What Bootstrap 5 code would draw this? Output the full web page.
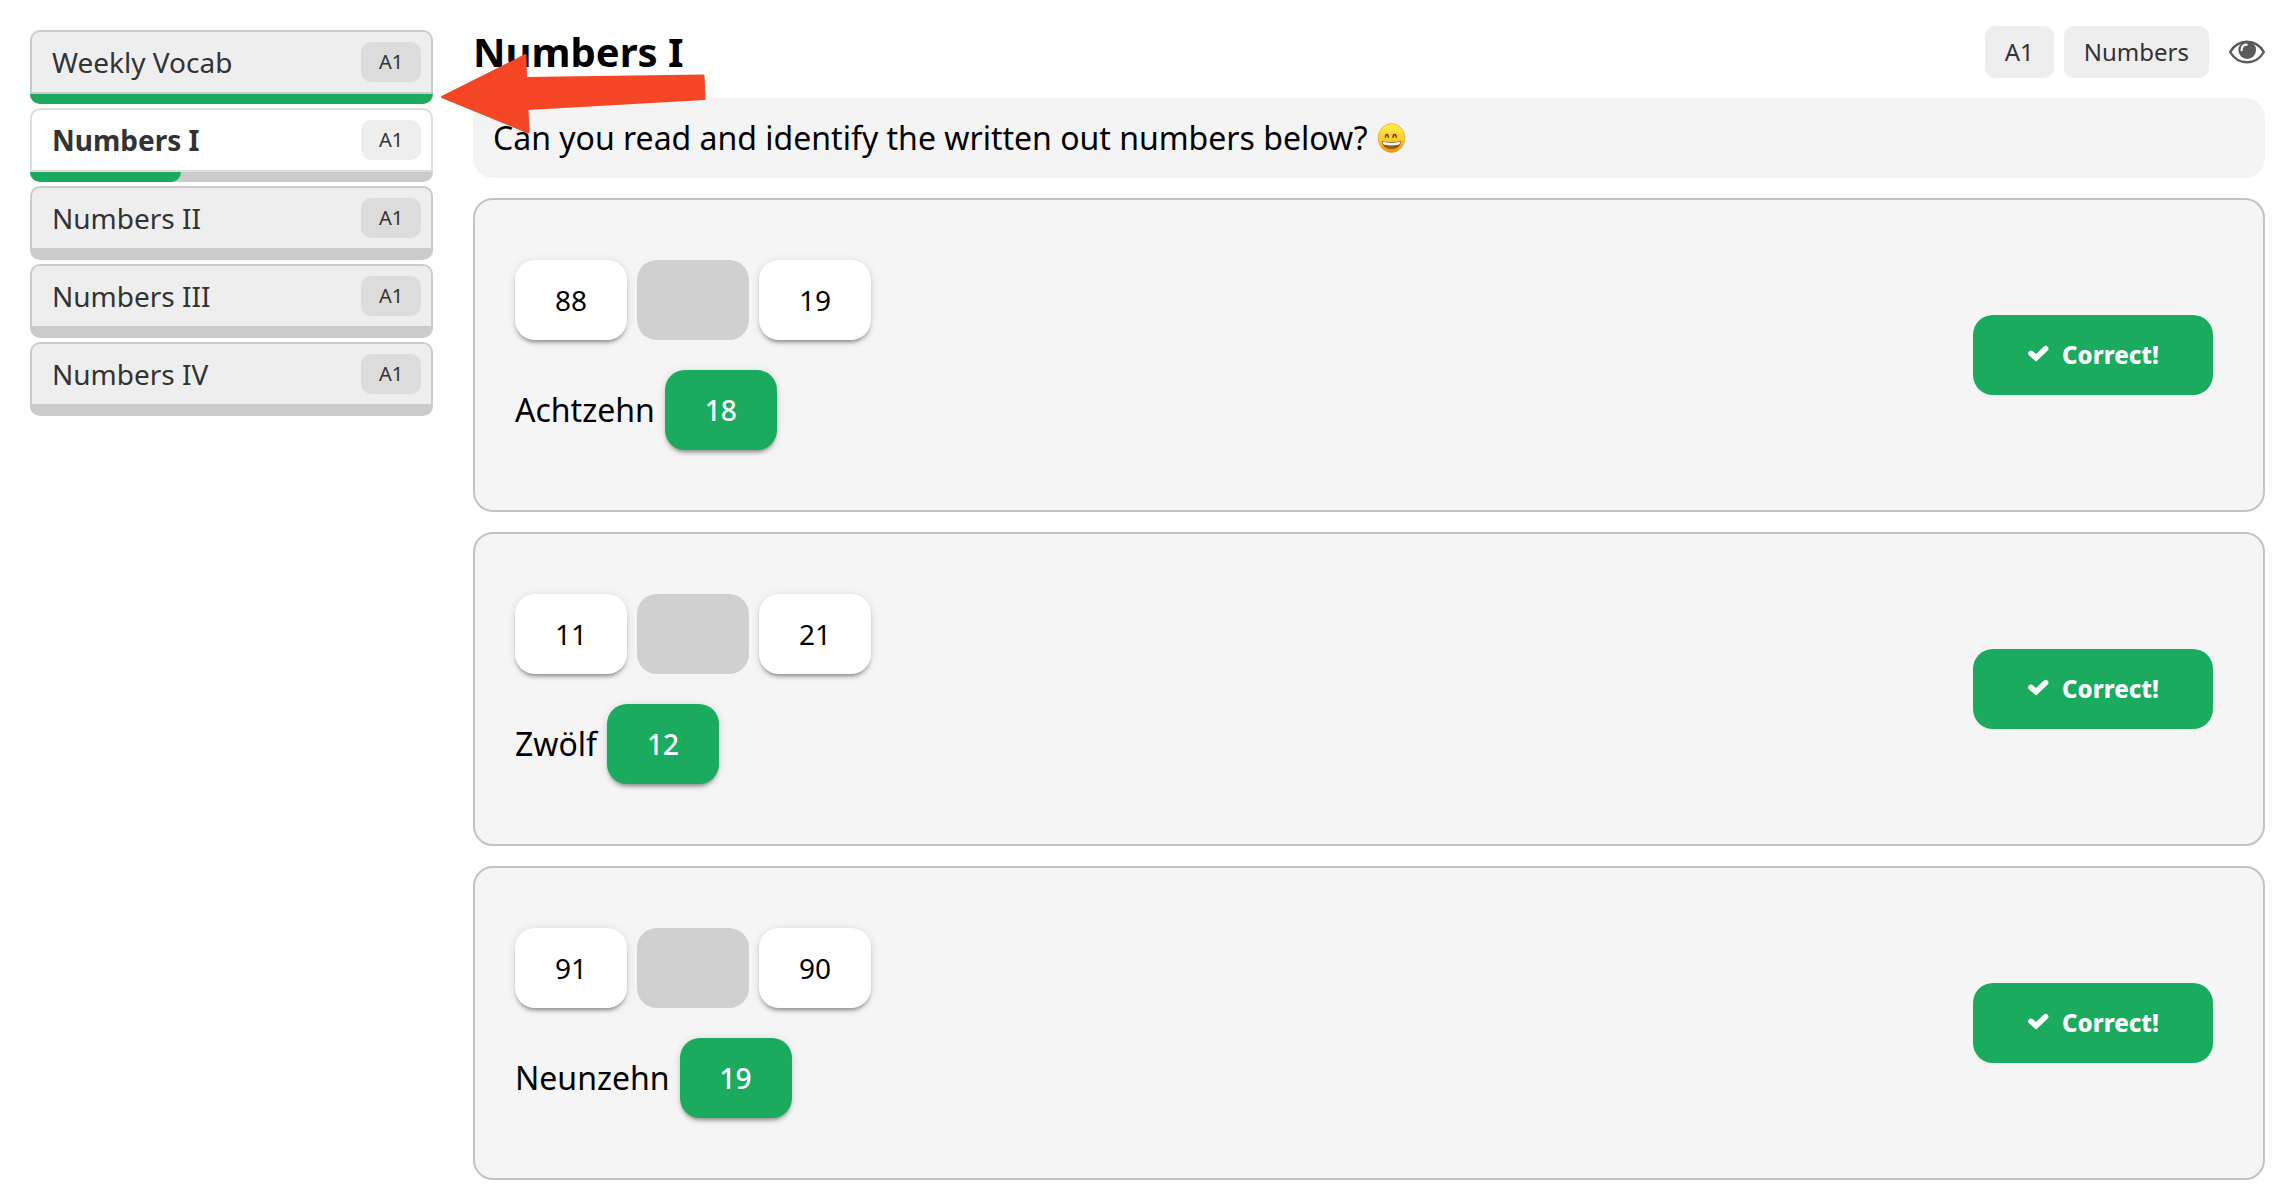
<!DOCTYPE html>
<html lang="en">
<head>
<meta charset="utf-8">
<meta name="viewport" content="width=device-width, initial-scale=1">
<title>Numbers I</title>
<link rel="stylesheet" href="https://cdn.jsdelivr.net/npm/bootstrap@5.3.0/dist/css/bootstrap.min.css">
<style>
  :root { --leaf: #1aab5f; --ink: #333; }
  body { font-family: "Noto Sans", "Open Sans", sans-serif; color: #000; background: #fff; }
  .page { gap: 40px; padding: 26px 25px 16px 30px; }
  .lessons { flex: 0 0 403px; gap: 4px; padding-top: 4px; }
  .lesson { color: var(--ink); font-size: 28px; line-height: 40px; }
  .lesson-face { background: #eee; border: 2px solid #ccc; border-radius: 10px 10px 0 0; padding: 10px 10px 10px 20px; }
  .lesson.current { font-weight: 700; }
  .lesson.current .lesson-face { background: #fff; border-color: #ddd; }
  .level { width: 60px; height: 40px; border-radius: 10px; background: #dcdcdc; font-size: 20px; font-weight: 400; text-align: center; }
  .lesson.current .level { background: #eee; }
  .track { height: 10px; border-radius: 0 0 10px 10px; background: #cbcbcb; }
  .track-fill { height: 100%; border-radius: 0 0 10px 10px; background: var(--leaf); }
  .exercise { min-width: 0; gap: 20px; }
  .title { font-size: 40px; line-height: 52px; font-weight: 700; }
  .tag { color: var(--ink); background: #eee; border-radius: 10px; font-size: 24px; line-height: 52px; padding: 0 20px; }
  .eye { color: #5a5a5a; margin-left: 10px; line-height: 0; }
  .prompt { background: #f4f4f4; border-radius: 20px; padding: 16px 20px; font-size: 32px; line-height: 48px; }
  .question { background: #f5f5f5; border: 2px solid #c3c3c3; border-radius: 20px; padding: 60px 50px 60px 40px; }
  .rows { gap: 30px; font-size: 32px; line-height: 48px; }
  .tiles, .answer { gap: 10px; }
  .tile { width: 112px; height: 80px; border: 0; border-radius: 20px; background: #fff; color: #000; font-size: 28px; line-height: 40px; padding: 0; box-shadow: 0 4px 4px -2px rgba(0,0,0,.4), 0 1px 8px rgba(0,0,0,.12); }
  .tile.right { background: var(--leaf); color: #fff; font-weight: 500; }
  .slot { width: 112px; height: 80px; border-radius: 20px; background: #d0d0d0; }
  .check-btn, .check-btn:hover { width: 240px; height: 80px; border: 0; border-radius: 20px; background: var(--leaf); color: #fff; font-size: 24px; font-weight: 800; gap: 13px; }
  .pointer { left: 440px; top: 52px; pointer-events: none; }
</style>
<script src="https://cdn.jsdelivr.net/npm/bootstrap@5.3.0/dist/js/bootstrap.bundle.min.js" defer></script>
</head>
<body class="position-relative">
<svg width="0" height="0" class="position-absolute" aria-hidden="true">
  <symbol id="tick" viewBox="0 0 22 22">
    <path d="M4 9.400 L9.100 13.800 L18.600 4.800" fill="none" stroke="currentColor" stroke-width="5.600" stroke-linejoin="miter" stroke-linecap="round"/>
  </symbol>
</svg>
<div class="page d-flex align-items-start">
  <nav class="lessons d-flex flex-column" aria-label="Lessons">
    <a href="#" class="lesson d-block text-decoration-none">
      <div class="lesson-face d-flex justify-content-between"><span>Weekly Vocab</span><span class="level">A1</span></div>
      <div class="track"><div class="track-fill" style="width:100%"></div></div>
    </a>
    <a href="#" class="lesson current d-block text-decoration-none" aria-current="page">
      <div class="lesson-face d-flex justify-content-between"><span>Numbers I</span><span class="level">A1</span></div>
      <div class="track"><div class="track-fill" style="width:37.5%"></div></div>
    </a>
    <a href="#" class="lesson d-block text-decoration-none">
      <div class="lesson-face d-flex justify-content-between"><span>Numbers II</span><span class="level">A1</span></div>
      <div class="track"></div>
    </a>
    <a href="#" class="lesson d-block text-decoration-none">
      <div class="lesson-face d-flex justify-content-between"><span>Numbers III</span><span class="level">A1</span></div>
      <div class="track"></div>
    </a>
    <a href="#" class="lesson d-block text-decoration-none">
      <div class="lesson-face d-flex justify-content-between"><span>Numbers IV</span><span class="level">A1</span></div>
      <div class="track"></div>
    </a>
  </nav>

  <main class="exercise flex-grow-1 d-flex flex-column">
    <header class="d-flex justify-content-between align-items-center">
      <h1 class="title m-0">Numbers I</h1>
      <div class="d-flex align-items-center tiles">
        <span class="tag">A1</span>
        <span class="tag">Numbers</span>
        <button type="button" class="eye btn p-0 border-0" aria-label="Show answers">
          <svg width="36" height="24" viewBox="0 0 36 24">
            <path d="M1.200 12 C5 5.400 11 1.800 18 1.800 C25 1.800 31 5.400 34.800 12 C31 18.600 25 22.200 18 22.200 C11 22.200 5 18.600 1.200 12 Z" fill="#fff" stroke="currentColor" stroke-width="2.400" stroke-linejoin="round"/>
            <circle cx="18.200" cy="10" r="8.900" fill="currentColor"/>
            <path d="M12.600 10.200 C12.600 7 14.600 4.900 17.600 4.700" fill="none" stroke="#fff" stroke-width="2.200" stroke-linecap="round"/>
          </svg>
        </button>
      </div>
    </header>

    <div class="prompt d-flex align-items-center gap-2">
      <span>Can you read and identify the written out numbers below?</span>
      <svg width="30" height="30" viewBox="0 0 30 30" role="img" aria-label="Grinning face with smiling eyes">
        <defs>
          <linearGradient id="face" x1="0" y1="0" x2="0" y2="1"><stop offset="0" stop-color="#fff04d"/><stop offset=".55" stop-color="#fdca2c"/><stop offset="1" stop-color="#ef8e0e"/></linearGradient>
          <linearGradient id="mouth" x1="0" y1="0" x2="0" y2="1"><stop offset="0" stop-color="#6b3a05"/><stop offset="1" stop-color="#a86609"/></linearGradient>
        </defs>
        <ellipse cx="15.500" cy="15" rx="13.400" ry="14.400" fill="url(#face)" stroke="#f2a31c" stroke-width=".7"/>
        <path d="M9.400 14.200 C9.800 10.600 12 10.600 12.400 14.200 M17 14.200 C17.400 10.600 19.600 10.600 20.200 14.200" fill="none" stroke="#6b3a05" stroke-width="1.500" stroke-linecap="round"/>
        <path d="M6 18.200 C12 19.400 19 19.400 25 18.200 C24.800 23.200 20.600 26.200 15.500 26.200 C10.400 26.200 6.200 23.200 6 18.200 Z" fill="url(#mouth)"/>
        <path d="M6.600 18.800 C12 20 19 20 24.400 18.800 C24.400 20.400 23.800 21.400 22.800 21.700 C18 22.600 13 22.600 8.200 21.700 C7.200 21.400 6.600 20.400 6.600 18.800 Z" fill="#fff"/>
      </svg>
    </div>

    <section class="question d-flex justify-content-between align-items-center">
      <div class="rows d-flex flex-column">
        <div class="tiles d-flex"><button type="button" class="tile">88</button><div class="slot"></div><button type="button" class="tile">19</button></div>
        <div class="answer d-flex align-items-center"><span>Achtzehn</span><button type="button" class="tile right">18</button></div>
      </div>
      <button type="button" class="check-btn btn d-flex align-items-center justify-content-center"><svg width="22" height="22" aria-hidden="true"><use href="#tick"/></svg>Correct!</button>
    </section>

    <section class="question d-flex justify-content-between align-items-center">
      <div class="rows d-flex flex-column">
        <div class="tiles d-flex"><button type="button" class="tile">11</button><div class="slot"></div><button type="button" class="tile">21</button></div>
        <div class="answer d-flex align-items-center"><span>Zwölf</span><button type="button" class="tile right">12</button></div>
      </div>
      <button type="button" class="check-btn btn d-flex align-items-center justify-content-center"><svg width="22" height="22" aria-hidden="true"><use href="#tick"/></svg>Correct!</button>
    </section>

    <section class="question d-flex justify-content-between align-items-center">
      <div class="rows d-flex flex-column">
        <div class="tiles d-flex"><button type="button" class="tile">91</button><div class="slot"></div><button type="button" class="tile">90</button></div>
        <div class="answer d-flex align-items-center"><span>Neunzehn</span><button type="button" class="tile right">19</button></div>
      </div>
      <button type="button" class="check-btn btn d-flex align-items-center justify-content-center"><svg width="22" height="22" aria-hidden="true"><use href="#tick"/></svg>Correct!</button>
    </section>
  </main>
</div>

<!-- Arrow laid over the page, pointing at the finished lesson's progress bar -->
<svg class="pointer position-absolute" width="268" height="84" viewBox="0 0 268 84" aria-hidden="true">
  <path d="M2 45 L85.500 3 L86 26 L263.500 23.500 L264.500 47 L87.500 57 L88.500 80.500 Z" fill="#f54725" stroke="#f54725" stroke-width="2" stroke-linejoin="round"/>
</svg>
</body>
</html>
